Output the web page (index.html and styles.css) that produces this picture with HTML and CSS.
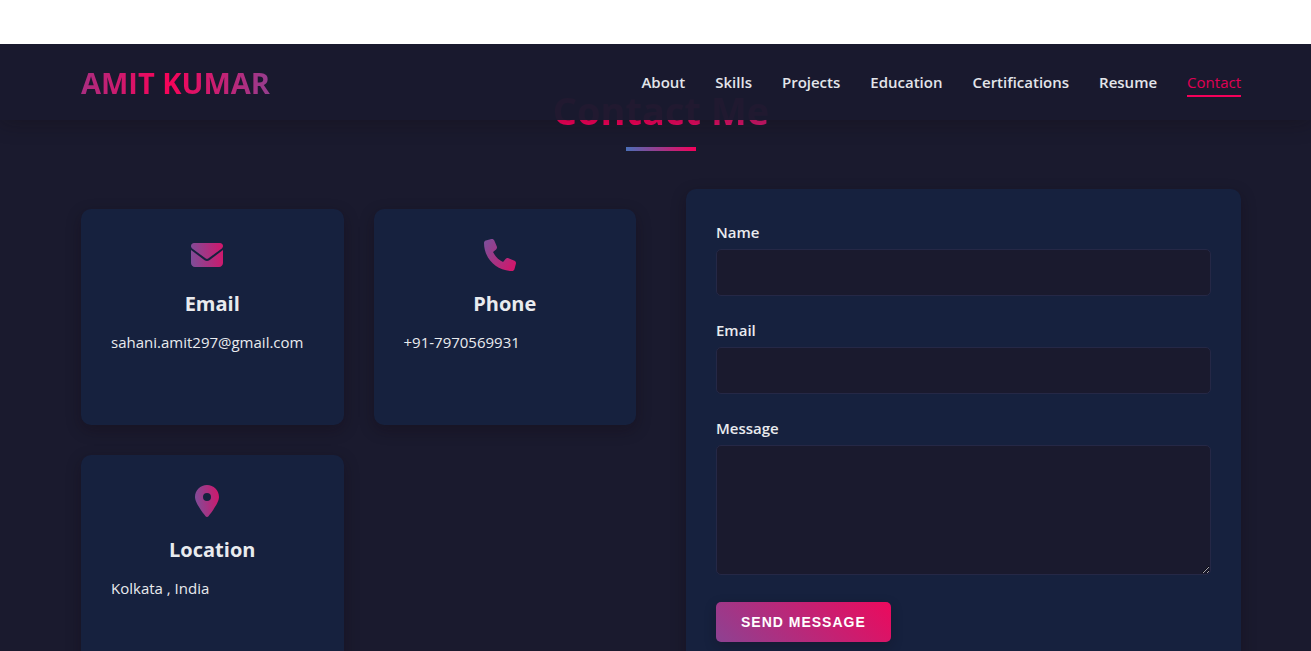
FILE: index.html
```html
<!DOCTYPE html>
<html lang="en">
<head>
<meta charset="utf-8">
<meta name="viewport" content="width=device-width, initial-scale=1">
<title>Amit Kumar | Contact</title>
<link rel="stylesheet" href="styles.css">
</head>
<body>
<header class="header">
  <a class="logo" href="#home">AMIT KUMAR</a>
  <nav class="nav" aria-label="Main">
    <a class="nav-link" href="#about">About</a>
    <a class="nav-link" href="#skills">Skills</a>
    <a class="nav-link" href="#projects">Projects</a>
    <a class="nav-link" href="#education">Education</a>
    <a class="nav-link" href="#certifications">Certifications</a>
    <a class="nav-link" href="#resume">Resume</a>
    <a class="nav-link active" href="#contact" aria-current="true">Contact</a>
  </nav>
</header>
<main class="contact" id="contact">
  <h2 class="section-title">Contact Me</h2>
  <div class="contact-grid">
    <div class="cards">
      <article class="card">
        <svg class="card-icon" viewBox="0 0 512 512" aria-hidden="true">
          <defs><linearGradient id="g1" gradientUnits="userSpaceOnUse" x1="0" y1="256" x2="512" y2="200"><stop offset="0" stop-color="#804c98"/><stop offset="1" stop-color="#cf186c"/></linearGradient></defs>
          <path fill="url(#g1)" d="M48 64C21.500 64 0 85.500 0 112c0 15.100 7.100 29.300 19.200 38.400L236.800 313.600c11.400 8.500 27 8.500 38.400 0L492.800 150.400c12.100-9.100 19.200-23.300 19.200-38.400c0-26.500-21.500-48-48-48H48zM0 176V384c0 35.300 28.700 64 64 64H448c35.300 0 64-28.700 64-64V176L294.400 339.200c-22.800 17.100-54 17.100-76.800 0L0 176z"/>
        </svg>
        <h3 class="card-title">Email</h3>
        <p class="card-text">sahani.amit297@gmail.com</p>
      </article>
      <article class="card">
        <svg class="card-icon" viewBox="0 0 512 512" aria-hidden="true">
          <defs><linearGradient id="g2" gradientUnits="userSpaceOnUse" x1="0" y1="100" x2="500" y2="400"><stop offset="0" stop-color="#804c98"/><stop offset="1" stop-color="#cf186c"/></linearGradient></defs>
          <path fill="url(#g2)" d="M164.900 24.600c-7.700-18.600-28-28.500-47.400-23.200l-88 24C12.100 30.200 0 46 0 64C0 311.400 200.600 512 448 512c18 0 33.800-12.100 38.600-29.500l24-88c5.300-19.400-4.600-39.700-23.200-47.400l-96-40c-16.300-6.800-35.200-2.100-46.300 11.600L304.700 368C234.300 334.700 177.300 277.700 144 207.300L193.300 167c13.700-11.200 18.400-30 11.600-46.300l-40-96z"/>
        </svg>
        <h3 class="card-title">Phone</h3>
        <p class="card-text">+91-7970569931</p>
      </article>
      <article class="card">
        <svg class="card-icon" viewBox="-64 0 512 512" aria-hidden="true">
          <defs><linearGradient id="g3" gradientUnits="userSpaceOnUse" x1="0" y1="220" x2="384" y2="180"><stop offset="0" stop-color="#804c98"/><stop offset="1" stop-color="#cf186c"/></linearGradient></defs>
          <path fill="url(#g3)" d="M215.700 499.200C267 435 384 279.400 384 192C384 86 298 0 192 0S0 86 0 192c0 87.400 117 243 168.300 307.200c12.300 15.300 35.100 15.300 47.400 0zM192 128a64 64 0 1 1 0 128 64 64 0 1 1 0-128z"/>
        </svg>
        <h3 class="card-title">Location</h3>
        <p class="card-text">Kolkata , India</p>
      </article>
    </div>
    <form class="form">
      <div class="field">
        <label class="label" for="name">Name</label>
        <input class="control" type="text" id="name" name="name">
      </div>
      <div class="field">
        <label class="label" for="email">Email</label>
        <input class="control" type="email" id="email" name="email">
      </div>
      <div class="field">
        <label class="label" for="message">Message</label>
        <textarea class="control message" id="message" name="message"></textarea>
      </div>
      <button class="send" type="submit">SEND MESSAGE</button>
    </form>
  </div>
</main>
</body>
</html>
```
FILE: styles.css
```css
* { box-sizing: border-box; }

body {
  margin: 0;
  padding-top: 44px;
  background: #fff;
  color: #e9ebee;
  font-family: "Segoe UI", "Open Sans", "Noto Sans", sans-serif;
  font-size: 15px;
  line-height: 26px;
}

h2, h3, p { margin: 0; }

.header {
  position: relative;
  z-index: 2;
  display: flex;
  align-items: center;
  justify-content: space-between;
  height: 76px;
  padding: 2px 70px 0 81px;
  background: rgba(26, 26, 46, 0.97);
  box-shadow: 0 2px 20px rgba(20, 10, 10, 0.3);
  clip-path: inset(0 0 -40px 0);
}

.logo {
  font-size: 29px;
  font-weight: 700;
  line-height: 40px;
  text-decoration: none;
  color: transparent;
  background: linear-gradient(90deg, #a92d80, #f5055a 42%, #f5055a 48%, #953d8e);
  background-clip: text;
  -webkit-background-clip: text;
}

.nav { display: flex; gap: 30px; }

.nav-link {
  border-bottom: 2px solid transparent;
  color: #e3e5ea;
  font-weight: 600;
  text-decoration: none;
}

.nav-link.active {
  color: #e00055;
  border-color: #f5005a;
  font-weight: 500;
}

.contact {
  margin-top: -76px;
  padding: 40px 70px 80px 81px;
  background: #1a1a2e;
}

.section-title {
  display: flex;
  flex-direction: column;
  align-items: center;
  gap: 10px;
  font-size: 38px;
  font-weight: 700;
  line-height: 53px;
  color: transparent;
  background: linear-gradient(90deg, #f5005a 48%, #a93382 72%);
  background-clip: text;
  -webkit-background-clip: text;
}

.section-title::after {
  content: "";
  width: 70px;
  height: 4px;
  background: linear-gradient(90deg, #4a6fb8, #f5005a);
}

.contact-grid {
  display: grid;
  grid-template-columns: 1fr 1fr;
  gap: 50px;
  align-items: start;
  margin-top: 38px;
}

.cards {
  display: grid;
  grid-template-columns: 1fr 1fr;
  grid-auto-rows: 216px;
  gap: 30px;
  margin-top: 20px;
}

.card, .form {
  padding: 30px;
  border-radius: 10px;
  background: #16213e;
  box-shadow: 0 5px 15px rgba(20, 8, 14, 0.3);
}

.card {
  display: flex;
  flex-direction: column;
  align-items: center;
}

.card-icon {
  display: block;
  width: 32px;
  height: 32px;
  margin-right: 10px;
}

.card-title {
  margin: 16px 0 8px;
  font-size: 20px;
  font-weight: 700;
  line-height: 34px;
}

.card-text { align-self: stretch; }

.form {
  display: flex;
  flex-direction: column;
  align-items: flex-start;
  gap: 21px;
}

.field {
  display: flex;
  flex-direction: column;
  gap: 4px;
  width: 100%;
}

.label { font-weight: 600; }

.control {
  display: block;
  width: 100%;
  height: 47px;
  padding: 12px;
  border: 1px solid #252846;
  border-radius: 5px;
  background: #1a1a2e;
  color: #e9ebee;
  font: inherit;
}

.message {
  height: 130px;
  resize: vertical;
}

.send {
  margin-top: 6px;
  padding: 12px 25px;
  border: 0;
  border-radius: 5px;
  background: linear-gradient(45deg, #8d4292, #e80c5f 96%);
  box-shadow: 0 4px 12px rgba(20, 12, 24, 0.3);
  color: #fff;
  font-family: "Liberation Sans", Arial, sans-serif;
  font-size: 14px;
  font-weight: 700;
  line-height: 16px;
  letter-spacing: 1px;
}
```
